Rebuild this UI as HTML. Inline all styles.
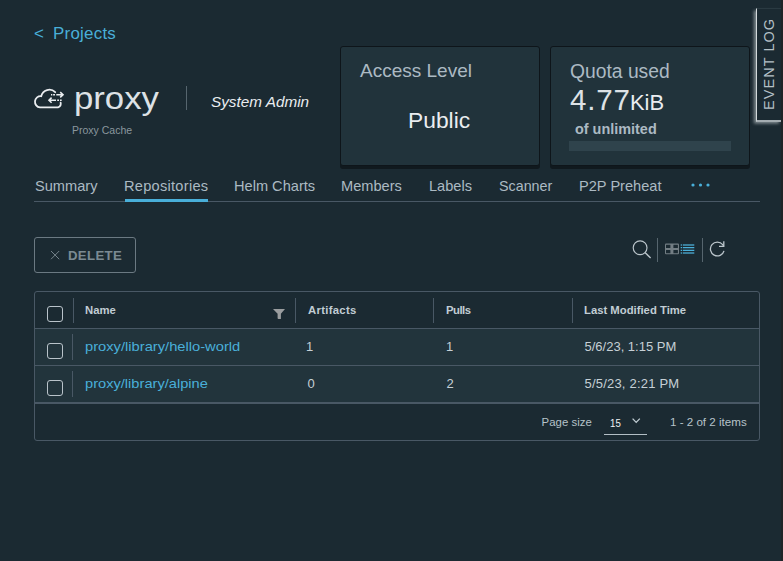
<!DOCTYPE html>
<html><head><meta charset="utf-8">
<style>
*{margin:0;padding:0;box-sizing:border-box}
html,body{width:783px;height:561px;overflow:hidden;background:#1b2a32;font-family:"Liberation Sans",sans-serif}
.a{position:absolute;white-space:pre;line-height:1}
.card{position:absolute;background:#21333b;border:1px solid #0e151a;border-radius:3px;box-shadow:0 3px 0 #10191e}
.link{color:#49afd9}
.tab{position:absolute;top:179px;font-size:14.6px;color:#acbac3;line-height:1}
.vsep{position:absolute;width:1px;background:#495865}
.hdr{position:absolute;top:305px;font-size:11.3px;font-weight:bold;color:#c1cdd4;line-height:1}
.cb{position:absolute;width:16px;height:16px;border:1.5px solid #b9c3ca;border-radius:3px}
.cell{position:absolute;font-size:13px;color:#c6d0d6;line-height:1}
.cell.link{color:#49afd9}
</style></head><body>

<!-- back link -->
<div class="a link" style="left:34px;top:26.3px;font-size:16.9px">&lt;</div>
<div class="a link" style="left:53px;top:26.3px;font-size:16.9px;letter-spacing:0.25px">Projects</div>

<!-- cloud icon -->
<svg class="a" style="left:30px;top:84px" width="38" height="28" viewBox="0 0 38 28">
 <path d="M25.2 8.2 A8.3 8.3 0 0 0 11.2 12.2 A5.6 5.6 0 0 0 10 23.4 H28 A4 4 0 0 0 30.6 18.6" fill="none" stroke="#eaedf0" stroke-width="1.8" stroke-linecap="round"/>
 <path d="M21 10.7 H22.3 M23.1 10.7 H25 M26.3 10.7 H33 M30.2 8.1 L33 10.7 L30.2 13.3" fill="none" stroke="#eaedf0" stroke-width="1.6"/>
 <path d="M19 16.2 H26 M27.2 16.2 H29 M30 16.2 H31.7 M21.6 13.6 L19 16.2 L21.6 18.8" fill="none" stroke="#eaedf0" stroke-width="1.6"/>
</svg>

<div class="a" style="left:73.5px;top:83px;font-size:31px;transform:scaleX(1.12);transform-origin:0 0;color:#dde2e6">proxy</div>
<div class="a" style="left:72px;top:125.3px;font-size:10.5px;color:#8a979e">Proxy Cache</div>
<div class="vsep" style="left:186px;top:86px;height:24px;background:#56656e"></div>
<div class="a" style="left:211px;top:94.2px;font-size:15.3px;font-style:italic;color:#eaedf0">System Admin</div>

<!-- cards -->
<div class="card" style="left:340px;top:46px;width:200px;height:120px"></div>
<div class="a" style="left:360px;top:61px;font-size:19px;color:#acbac3">Access Level</div>
<div class="a" style="left:408px;top:108.5px;font-size:22.8px;color:#eaedf0">Public</div>

<div class="card" style="left:550px;top:46px;width:200px;height:120px"></div>
<div class="a" style="left:570px;top:62px;font-size:19.3px;color:#acbac3">Quota used</div>
<div class="a" style="left:570px;top:85px;font-size:29.5px;letter-spacing:0.8px;color:#dde2e6">4.77</div>
<div class="a" style="left:630px;top:92px;font-size:22.6px;transform:scaleX(0.97);transform-origin:0 0;color:#eaedf0">KiB</div>
<div class="a" style="left:574.5px;top:122.6px;font-size:13.8px;transform:scaleX(1.045);transform-origin:0 0;font-weight:bold;color:#acbac3">of unlimited</div>
<div class="a" style="left:569px;top:141px;width:162px;height:10px;background:#2f434c"></div>

<!-- event log -->
<div class="a" style="left:756px;top:8px;width:25px;height:113.5px;border-left:1.3px solid #d3d9dc;border-bottom:2px solid #a3acb1;border-top:1px solid #2a3a42;box-shadow:-2px 1.5px 3px rgba(200,208,212,.6);background:#1b2a32"></div>
<div class="a" style="left:781px;top:0;width:2px;height:561px;background:#1f2427"></div>
<div class="a" style="left:762px;top:109.5px;font-size:14.5px;letter-spacing:1.05px;color:#b4c0c7;transform:rotate(-90deg);transform-origin:0 0">EVENT LOG</div>

<!-- tabs -->
<div class="a" style="left:34px;top:201px;width:726px;height:1px;background:#495865"></div>
<div class="tab" style="left:35px">Summary</div>
<div class="tab" style="left:124px;letter-spacing:0.27px">Repositories</div>
<div class="a" style="left:125px;top:199px;width:83px;height:3px;background:#49afd9"></div>
<div class="tab" style="left:234px">Helm Charts</div>
<div class="tab" style="left:341px">Members</div>
<div class="tab" style="left:429px">Labels</div>
<div class="tab" style="left:499px;font-size:14.3px">Scanner</div>
<div class="tab" style="left:579px">P2P Preheat</div>
<svg class="a" style="left:690px;top:182px" width="22" height="6"><circle cx="3" cy="3" r="1.6" fill="#49afd9"/><circle cx="10.5" cy="3" r="1.6" fill="#49afd9"/><circle cx="18" cy="3" r="1.6" fill="#49afd9"/></svg>

<!-- delete button -->
<div class="a" style="left:34px;top:237px;width:102px;height:36px;border:1px solid #6b7982;border-radius:3px"></div>
<svg class="a" style="left:49px;top:249px" width="12" height="12"><path d="M2 2 L10.2 10.2 M10.2 2 L2 10.2" stroke="#75838b" stroke-width="1"/></svg>
<div class="a" style="left:68px;top:250px;font-size:12px;font-weight:bold;color:#7b8a93;letter-spacing:0.3px;transform:scaleX(1.1);transform-origin:0 0">DELETE</div>

<!-- toolbar -->
<svg class="a" style="left:630px;top:238px" width="24" height="24"><circle cx="10.1" cy="9.7" r="6.9" fill="none" stroke="#bcc6cc" stroke-width="1.15"/><path d="M15 14.6 L20.6 19.9" stroke="#bcc6cc" stroke-width="1.4"/></svg>
<div class="vsep" style="left:657px;top:238px;height:24px;background:#56656e"></div>
<svg class="a" style="left:661px;top:240px" width="38" height="18">
 <rect x="4" y="3.6" width="14" height="10.7" rx="1" fill="#737e84"/>
 <rect x="5" y="4.8" width="4.4" height="3.2" rx="0.3" fill="#1b2a32"/><rect x="12.4" y="4.8" width="4.5" height="3.2" rx="0.3" fill="#1b2a32"/>
 <rect x="5" y="10" width="4.4" height="3.2" rx="0.3" fill="#1b2a32"/><rect x="12.4" y="10" width="4.5" height="3.2" rx="0.3" fill="#1b2a32"/>
 <path d="M21.8 5 H33.3 M21.8 13 H33.3" stroke="#3a7e9b" stroke-width="1.9"/>
 <path d="M21.8 7.6 H33.3 M21.8 10.4 H33.3" stroke="#49afd9" stroke-width="1.2"/>
 <path d="M19.7 5 H21 M19.7 13 H21" stroke="#3a7e9b" stroke-width="1.9"/>
 <path d="M19.7 7.6 H21 M19.7 10.4 H21" stroke="#49afd9" stroke-width="1.2"/>
</svg>
<div class="vsep" style="left:702px;top:238px;height:24px;background:#56656e"></div>
<svg class="a" style="left:707px;top:238px" width="22" height="22"><path d="M17 12.8 A6.9 6.9 0 1 1 15.7 6.7 L16.6 8.2" fill="none" stroke="#bcc6cc" stroke-width="1.3"/><path d="M16.8 3.3 V8.4 H12" fill="none" stroke="#bcc6cc" stroke-width="1.3"/></svg>

<!-- datagrid -->
<div class="a" style="left:34px;top:291px;width:726px;height:150px;border:1px solid #495865;border-radius:3px"></div>
<div class="a" style="left:35px;top:328px;width:724px;height:1px;background:#495865"></div>
<div class="a" style="left:35px;top:329px;width:724px;height:36px;background:#22343c"></div>
<div class="a" style="left:35px;top:365px;width:724px;height:1px;background:#495865"></div>
<div class="a" style="left:35px;top:366px;width:724px;height:36px;background:#22343c"></div>
<div class="a" style="left:35px;top:402px;width:724px;height:2px;background:#495865"></div>

<div class="cb" style="left:47px;top:306px"></div>
<div class="vsep" style="left:73px;top:298px;height:25px"></div>
<div class="hdr" style="left:85px">Name</div>
<svg class="a" style="left:272px;top:307px" width="14" height="13"><path d="M1 2 H13 L8.9 6.7 V11.9 H6.4 Q5.6 11.9 5.6 11 V6.7 Z" fill="#9a9d9f"/></svg>
<div class="vsep" style="left:295px;top:298px;height:25px"></div>
<div class="hdr" style="left:308px;letter-spacing:0.3px">Artifacts</div>
<div class="vsep" style="left:433px;top:298px;height:25px"></div>
<div class="hdr" style="left:446px;letter-spacing:-0.5px">Pulls</div>
<div class="vsep" style="left:572px;top:298px;height:25px"></div>
<div class="hdr" style="left:584px">Last Modified Time</div>

<div class="cb" style="left:47px;top:343px"></div>
<div class="vsep" style="left:72px;top:334px;height:26px"></div>
<div class="cell link" style="left:85px;top:339.8px;font-size:13.2px;transform:scaleX(1.115);transform-origin:0 0">proxy/library/hello-world</div>
<div class="cell" style="left:306px;top:340px">1</div>
<div class="cell" style="left:446px;top:340px">1</div>
<div class="cell" style="left:584.5px;top:340px">5/6/23, 1:15 PM</div>

<div class="cb" style="left:47px;top:380px"></div>
<div class="vsep" style="left:72px;top:371px;height:26px"></div>
<div class="cell link" style="left:85px;top:376.8px;font-size:13.2px;transform:scaleX(1.11);transform-origin:0 0">proxy/library/alpine</div>
<div class="cell" style="left:307.5px;top:377px">0</div>
<div class="cell" style="left:446.5px;top:377px">2</div>
<div class="cell" style="left:584.5px;top:377px;letter-spacing:0.2px">5/5/23, 2:21 PM</div>

<!-- footer -->
<div class="a" style="left:541.5px;top:416.5px;font-size:11.4px;letter-spacing:0.05px;color:#b6c2c9">Page size</div>
<div class="a" style="left:609.5px;top:418px;font-size:11.8px;transform:scaleX(0.82);transform-origin:0 0;color:#f0f3f5">15</div>
<svg class="a" style="left:630px;top:416px" width="12" height="9"><path d="M2.6 2.6 L6.2 6.4 L9.8 2.6" fill="none" stroke="#c1cdd4" stroke-width="1.3"/></svg>
<div class="a" style="left:604px;top:434px;width:43px;height:1px;background:#b3bec5"></div>
<div class="a" style="left:670px;top:415.8px;font-size:11.6px;color:#b6c2c9">1 - 2 of 2 items</div>

</body></html>
